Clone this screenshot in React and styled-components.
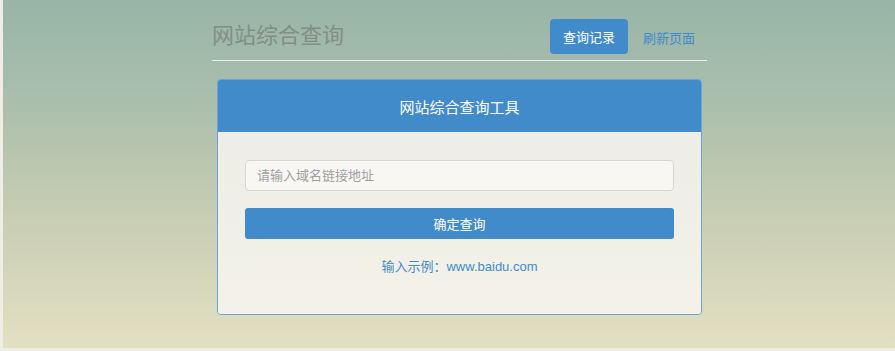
import React from 'react'
import styled, { createGlobalStyle } from 'styled-components'

const GlobalStyle = createGlobalStyle`
  html, body {
    margin: 0;
    padding: 0;
    height: 100%;
  }
  body {
    background: #eeeee4;
    font-family: "Liberation Sans", "Noto Sans CJK SC", sans-serif;
  }
  #root {
    height: 100%;
  }
`

export default () =>
  <>
    <GlobalStyle />
    <Page>
      <Wrap>
        <Header>
          <Title>网站综合查询</Title>
          <Nav>
            <NavButton>查询记录</NavButton>
            <NavLink>刷新页面</NavLink>
          </Nav>
        </Header>
        <Panel>
          <PanelHead>网站综合查询工具</PanelHead>
          <PanelBody>
            <Input placeholder='请输入域名链接地址' />
            <Submit>确定查询</Submit>
            <Example>输入示例：www.baidu.com</Example>
          </PanelBody>
        </Panel>
      </Wrap>
    </Page>
  </>

const Page = styled.div`
  box-sizing: border-box;
  height: 348px;
  margin-left: 3px;
  background: linear-gradient(180deg, #97b5a8 0%, #abbfac 30%, #c8cdb4 62%, #e3e0c2 100%);
  overflow: hidden;
`

const Wrap = styled.div`
  width: 495px;
  margin-left: 209px;
  padding-top: 19px;
`

const Header = styled.div`
  display: flex;
  align-items: center;
  justify-content: space-between;
  height: 35px;
  padding-bottom: 6px;
  border-bottom: 1px solid rgba(255, 255, 255, 0.75);
`

const Title = styled.h1`
  margin: 0 0 2px 0;
  font-size: 22px;
  font-weight: normal;
  color: #838e88;
  line-height: 1;
`

const Nav = styled.div`
  display: flex;
  align-items: center;
  gap: 15px;
  padding-right: 12px;
`

const NavButton = styled.button`
  width: 78px;
  height: 35px;
  border: none;
  border-radius: 4px;
  background: #428bca;
  color: white;
  font-family: inherit;
  font-size: 13px;
  padding: 0;
`

const NavLink = styled.a`
  color: #428bca;
  font-size: 13px;
  margin-top: 2px;
`

const Panel = styled.div`
  margin: 18px 5px 0;
  border: 1px solid #6fa3d4;
  border-radius: 4px;
  overflow: hidden;
  height: 236px;
  box-sizing: border-box;
  display: flex;
  flex-direction: column;
`

const PanelHead = styled.div`
  height: 52px;
  background: #428bca;
  color: white;
  font-size: 15px;
  display: flex;
  align-items: center;
  justify-content: center;
`

const PanelBody = styled.div`
  flex: 1;
  background: linear-gradient(180deg, rgba(240, 240, 234, 0.95), rgba(245, 243, 234, 0.95));
  padding: 28px 27px 0;
  display: flex;
  flex-direction: column;
`

const Input = styled.input`
  box-sizing: border-box;
  height: 31px;
  border: 1px solid #d6d6d2;
  border-radius: 4px;
  background: #f8f7f4;
  padding: 0 11px;
  font-family: inherit;
  font-size: 13px;
  outline: none;

  &::placeholder {
    color: #a0a0a0;
  }
`

const Submit = styled.button`
  margin-top: 17px;
  height: 31px;
  border: none;
  border-radius: 3px;
  background: #428bca;
  color: white;
  font-family: inherit;
  font-size: 13px;
`

const Example = styled.p`
  margin: 19px 0 0;
  text-align: center;
  color: #428bca;
  font-size: 13px;
  line-height: 18px;
`
